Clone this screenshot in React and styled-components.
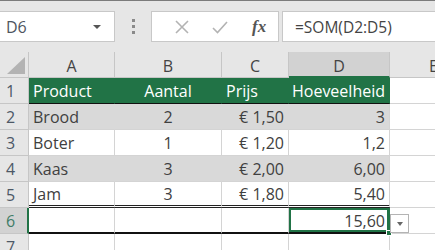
import React from "react";
import styled, { createGlobalStyle, css } from "styled-components";

const Global = createGlobalStyle`
  html, body { margin: 0; padding: 0; background: #ffffff; overflow: hidden; }
  body { font-family: "Open Sans", "Noto Sans", sans-serif; }
  * { box-sizing: border-box; }
`;

const GREEN = "#217346";

const Page = styled.div`
  width: 435px;
  height: 250px;
  overflow: hidden;
  background: #ffffff;
`;

const Toolbar = styled.div`
  height: 52px;
  background: #e6e6e6;
  border-top: 1px solid #7b7b7b;
  display: flex;
  align-items: flex-start;
  padding-top: 10px;
`;

const Box = styled.div`
  height: 31px;
  background: #ffffff;
  border: 1px solid #c8c8c8;
  display: flex;
  align-items: center;
`;

const NameBox = styled(Box)`
  width: 116px;
  margin-left: -1px;
  padding-left: 6px;
  justify-content: space-between;
  padding-right: 13px;
  font-size: 16px;
  color: #4f5560;
`;

const Caret = styled.span`
  width: 0;
  height: 0;
  border-left: 4px solid transparent;
  border-right: 4px solid transparent;
  border-top: 4px solid #555;
`;

const Grip = styled.div`
  width: 36px;
  height: 31px;
  display: flex;
  flex-direction: column;
  align-items: center;
  justify-content: center;
  gap: 3px;
`;

const Dot = styled.span`
  width: 3px;
  height: 3px;
  background: #8a8a8a;
`;

const ButtonBox = styled(Box)`
  width: 128px;
  padding-left: 11px;
`;

const FxButton = styled.span`
  width: 42px;
  display: flex;
  align-items: center;
  justify-content: center;
  font-family: "Liberation Serif", "DejaVu Serif", serif;
  font-style: italic;
  font-weight: bold;
  font-size: 17px;
  color: #555;
  margin-left: 2px;
`;

const IconSlot = styled.span`
  width: 42px;
  display: flex;
  align-items: center;
  justify-content: center;
`;

const FormulaBox = styled(Box)`
  flex: 1;
  margin-left: 3px;
  margin-right: -2px;
  padding-left: 12px;
  font-size: 15.5px;
  color: #444;
`;

const Sheet = styled.div`
  display: grid;
  grid-template-columns: 29px 86px 107px 67px 101px 1fr;
  grid-auto-rows: 26px;
`;

const Cell = styled.div`
  position: relative;
  display: flex;
  align-items: center;
  padding: 1px 4px 0 4px;
  font-size: 16px;
  color: #404040;
  white-space: nowrap;
  border-right: 1px solid ${(p) => (p.$noRight ? "transparent" : "#d4d4d4")};
  border-bottom: 1px solid #d4d4d4;
  background: ${(p) => p.$bg || "#ffffff"};
  justify-content: ${(p) =>
    p.$align === "right" ? "flex-end" : p.$align === "center" ? "center" : "flex-start"};
  ${(p) =>
    p.$head &&
    css`
      color: #ffffff;
      border-right-color: ${GREEN};
      border-bottom: 1px solid #111;
    `}
  ${(p) =>
    p.$totalTop &&
    css`
      border-bottom: 3px double #222;
    `}
  ${(p) =>
    p.$totalBottom &&
    css`
      border-bottom: 2px solid #111;
    `}
  ${(p) =>
    p.$selected &&
    css`
      box-shadow: inset 0 0 0 2px ${GREEN};
      border-right-color: ${GREEN};
      border-bottom: 2px solid #111;
    `}
`;

const ColHead = styled.div`
  display: flex;
  align-items: center;
  justify-content: ${(p) => (p.$left ? "flex-start" : "center")};
  padding: 3px 0 0 ${(p) => (p.$left ? "39px" : "0")};
  font-size: 16px;
  color: #444;
  background: ${(p) => (p.$active ? "#d2d2d2" : "#e6e6e6")};
  border-right: 1px solid #c6c6c6;
  border-bottom: ${(p) => (p.$active ? `2px solid ${GREEN}` : "1px solid #c6c6c6")};
`;

const Corner = styled.div`
  background: #e6e6e6;
  border-right: 1px solid #c6c6c6;
  border-bottom: 1px solid #c6c6c6;
  display: flex;
  align-items: flex-end;
  justify-content: flex-end;
  padding: 0 3px 3px 0;
`;

const RowHead = styled.div`
  display: flex;
  align-items: center;
  padding: 1px 0 0 6px;
  font-size: 16px;
  color: ${(p) => (p.$active ? "#3f7c67" : "#4d5866")};
  background: ${(p) => (p.$active ? "#d2d2d2" : "#e6e6e6")};
  border-right: ${(p) => (p.$active ? `2px solid ${GREEN}` : "1px solid #c6c6c6")};
  border-bottom: 1px solid #c6c6c6;
`;

const FillHandle = styled.span`
  position: absolute;
  right: -3px;
  bottom: -4px;
  width: 6px;
  height: 6px;
  background: ${GREEN};
  border: 1px solid #ffffff;
  z-index: 2;
`;

const AutoFill = styled.span`
  position: absolute;
  left: calc(100% + 1px);
  top: 6px;
  width: 19px;
  height: 19px;
  background: #ffffff;
  border: 1px solid #b4b4b4;
  display: flex;
  align-items: center;
  justify-content: center;
  z-index: 3;
`;

const SmallCaret = styled.span`
  width: 0;
  height: 0;
  border-left: 3.5px solid transparent;
  border-right: 3.5px solid transparent;
  border-top: 4px solid #666;
`;

const GREY_BAND = "#d9d9d9";

const rows = [
  { n: 2, a: "Brood", b: "2", c: "€ 1,50", d: "3", band: true },
  { n: 3, a: "Boter", b: "1", c: "€ 1,20", d: "1,2" },
  { n: 4, a: "Kaas", b: "3", c: "€ 2,00", d: "6,00", band: true },
  { n: 5, a: "Jam", b: "3", c: "€ 1,80", d: "5,40", last: true },
];

export default function App() {
  return (
    <Page>
      <Global />
      <Toolbar>
        <NameBox>
          <span>D6</span>
          <Caret />
        </NameBox>
        <Grip>
          <Dot />
          <Dot />
          <Dot />
        </Grip>
        <ButtonBox>
          <IconSlot>
            <svg width="16" height="16" viewBox="0 0 16 16">
              <path d="M2 2 L14 14 M14 2 L2 14" stroke="#b3b3b3" strokeWidth="1.6" fill="none" />
            </svg>
          </IconSlot>
          <IconSlot>
            <svg width="16" height="14" viewBox="0 0 16 14">
              <path d="M1 8 L5.5 12.5 L15 2" stroke="#b3b3b3" strokeWidth="1.6" fill="none" />
            </svg>
          </IconSlot>
          <FxButton>fx</FxButton>
        </ButtonBox>
        <FormulaBox>=SOM(D2:D5)</FormulaBox>
      </Toolbar>
      <Sheet>
        <Corner>
          <svg width="18" height="17" viewBox="0 0 18 17">
            <path d="M18 0 L18 17 L0 17 Z" fill="#b3b3b3" />
          </svg>
        </Corner>
        <ColHead>A</ColHead>
        <ColHead>B</ColHead>
        <ColHead>C</ColHead>
        <ColHead $active>D</ColHead>
        <ColHead $left>E</ColHead>

        <RowHead>1</RowHead>
        <Cell $bg={GREEN} $head>Product</Cell>
        <Cell $bg={GREEN} $head $align="center">Aantal</Cell>
        <Cell $bg={GREEN} $head>Prijs</Cell>
        <Cell $bg={GREEN} $head $align="right">Hoeveelheid</Cell>
        <Cell />

        {rows.map((r) => {
          const bg = r.band ? GREY_BAND : "#ffffff";
          return (
            <React.Fragment key={r.n}>
              <RowHead>{r.n}</RowHead>
              <Cell $bg={bg} $noRight={r.band} $totalTop={r.last}>{r.a}</Cell>
              <Cell $bg={bg} $noRight={r.band} $totalTop={r.last} $align="center">{r.b}</Cell>
              <Cell $bg={bg} $noRight={r.band} $totalTop={r.last} $align="right">{r.c}</Cell>
              <Cell $bg={bg} $totalTop={r.last} $align="right">{r.d}</Cell>
              <Cell />
            </React.Fragment>
          );
        })}

        <RowHead $active>6</RowHead>
        <Cell $totalBottom />
        <Cell $totalBottom />
        <Cell $totalBottom />
        <Cell $selected $align="right">
          15,60
          <FillHandle />
          <AutoFill>
            <SmallCaret />
          </AutoFill>
        </Cell>
        <Cell />

        <RowHead>7</RowHead>
        <Cell />
        <Cell />
        <Cell />
        <Cell />
        <Cell />
      </Sheet>
    </Page>
  );
}
